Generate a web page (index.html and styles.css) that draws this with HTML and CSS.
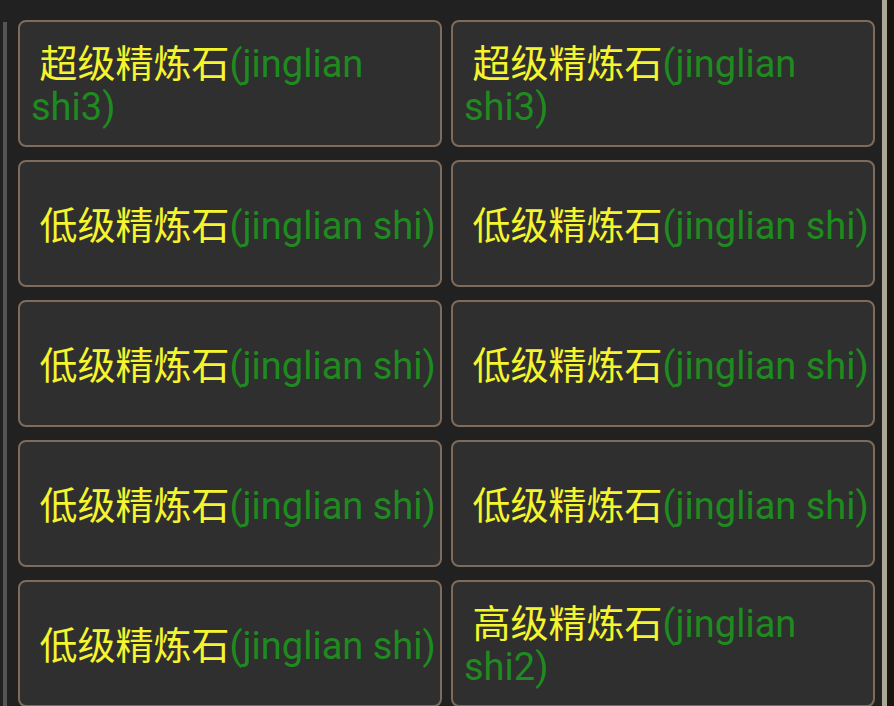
FILE: index.html
```html
<!DOCTYPE html>
<html lang="zh">
<head>
<meta charset="utf-8">
<link rel="stylesheet" href="styles.css">
</head>
<body>
<div class="page">
  <div class="leftbar"></div>
  <div class="grid">
    <div class="card"><span class="label"><span class="cn">&nbsp;超级精炼石</span><span class="en">(jinglian</span> <span class="en">shi3)</span></span></div>
    <div class="card"><span class="label"><span class="cn">&nbsp;超级精炼石</span><span class="en">(jinglian</span> <span class="en">shi3)</span></span></div>
    <div class="card"><span class="label"><span class="cn">&nbsp;低级精炼石</span><span class="en">(jinglian shi)</span></span></div>
    <div class="card"><span class="label"><span class="cn">&nbsp;低级精炼石</span><span class="en">(jinglian shi)</span></span></div>
    <div class="card"><span class="label"><span class="cn">&nbsp;低级精炼石</span><span class="en">(jinglian shi)</span></span></div>
    <div class="card"><span class="label"><span class="cn">&nbsp;低级精炼石</span><span class="en">(jinglian shi)</span></span></div>
    <div class="card"><span class="label"><span class="cn">&nbsp;低级精炼石</span><span class="en">(jinglian shi)</span></span></div>
    <div class="card"><span class="label"><span class="cn">&nbsp;低级精炼石</span><span class="en">(jinglian shi)</span></span></div>
    <div class="card"><span class="label"><span class="cn">&nbsp;低级精炼石</span><span class="en">(jinglian shi)</span></span></div>
    <div class="card"><span class="label"><span class="cn">&nbsp;高级精炼石</span><span class="en">(jinglian</span> <span class="en">shi2)</span></span></div>
  </div>
  <div class="rightgap"></div>
  <div class="rightbar"></div>
  <div class="rightedge"></div>
</div>
</body>
</html>
```

FILE: styles.css
```css
html, body {
  margin: 0;
  padding: 0;
  background: #212121;
  height: 706px;
  overflow: hidden;
}
.page {
  display: flex;
  height: 706px;
  font-family: Roboto, "Noto Sans CJK SC", sans-serif;
}
.leftbar {
  width: 4px;
  margin-left: 3px;
  margin-top: 22px;
  background: #555555;
  flex: none;
}
.grid {
  margin-left: 11px;
  padding-top: 20px;
  display: grid;
  grid-template-columns: 424px 424px;
  grid-auto-rows: 127px;
  column-gap: 9px;
  row-gap: 13px;
  flex: none;
}
.card {
  box-sizing: border-box;
  border: 2px solid #7f6b5b;
  border-radius: 8px;
  background: #2f2f2f;
  display: flex;
  align-items: center;
  justify-content: flex-start;
  padding: 1px 0 0 11px;
}
.label {
  font-size: 38px;
  line-height: 43px;
  text-align: left;
}
.cn {
  color: #f5f52e;
  font-family: "Noto Sans CJK SC", sans-serif;
}
.en {
  color: #1f8a1f;
  font-family: Roboto, sans-serif;
}
.rightgap {
  width: 7px;
  flex: none;
}
.rightbar {
  width: 5px;
  background: #a8aa97;
  flex: none;
}
.rightedge {
  width: 7px;
  background: #1b160d;
  flex: none;
}
```
